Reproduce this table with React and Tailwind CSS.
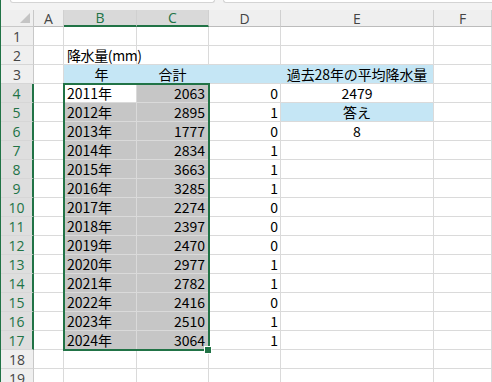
import React from "react";

const years = [
  ["2011年", 2063, 0],
  ["2012年", 2895, 1],
  ["2013年", 1777, 0],
  ["2014年", 2834, 1],
  ["2015年", 3663, 1],
  ["2016年", 3285, 1],
  ["2017年", 2274, 0],
  ["2018年", 2397, 0],
  ["2019年", 2470, 0],
  ["2020年", 2977, 1],
  ["2021年", 2782, 1],
  ["2022年", 2416, 0],
  ["2023年", 2510, 1],
  ["2024年", 3064, 1],
];

const columns = ["A", "B", "C", "D", "E", "F"];
const font = "font-['Noto_Sans_CJK_JP',sans-serif]";
const headFont = "font-['Open_Sans','Noto_Sans',sans-serif]";

function Cell({ children, className = "" }) {
  return (
    <div
      className={`h-[19px] overflow-visible whitespace-nowrap border-b border-r border-[#dadada] text-[14px] leading-[18px] text-black ${font} ${className}`}
    >
      {children}
    </div>
  );
}

function RowHead({ n, selected }) {
  return (
    <div
      className={`flex h-[19px] items-center justify-center border-b border-[#d6d6d6] text-[14px] ${headFont} ${
        selected
          ? "border-r-2 border-r-[#217346] bg-[#dedede] text-[#217346]"
          : "border-r border-r-[#c8c8c8] bg-[#efefef] text-[#444]"
      }`}
    >
      {n}
    </div>
  );
}

function buildRows() {
  const rows = [];
  for (let r = 1; r <= 19; r++) {
    const i = r - 4;
    const data = i >= 0 && i < years.length ? years[i] : null;
    let b = null;
    let c = null;
    let d = null;
    let e = null;
    let bCls = "";
    let cCls = "";
    let dCls = "";
    let eCls = "";

    if (r === 2) {
      b = "降水量(mm)";
      bCls = "tracking-[-0.4px]";
    }
    if (r === 3) {
      b = "年";
      c = "合計";
      e = "過去28年の平均降水量";
      bCls = "bg-[#c5e6f5] text-center border-r-[#c5e6f5]";
      cCls = "bg-[#c5e6f5] text-center border-r-[#c5e6f5]";
      dCls = "bg-[#c5e6f5] border-r-[#c5e6f5]";
      eCls = "bg-[#c5e6f5] text-center text-[13px] tracking-[-0.1px]";
    }
    if (data) {
      b = data[0];
      c = data[1];
      d = data[2];
      bCls = r === 4 ? "bg-white" : "bg-[#c6c6c6] border-[#b4b4b4]";
      cCls = "bg-[#c6c6c6] text-right pr-[3px] border-[#b4b4b4]";
      dCls = "text-right pr-[2px]";
    }
    if (r === 4) e = "2479";
    if (r === 5) {
      e = "答え";
      eCls = "bg-[#c5e6f5] text-center";
    }
    if (r === 6) e = "8";
    if (r === 4 || r === 6) eCls = "text-center";

    rows.push(
      <React.Fragment key={r}>
        <RowHead n={r} selected={r >= 4 && r <= 17} />
        <Cell />
        <Cell className={`pl-[3px] ${bCls}`}>{b}</Cell>
        <Cell className={cCls}>{c}</Cell>
        <Cell className={dCls}>{d}</Cell>
        <Cell className={eCls}>{e}</Cell>
        <Cell />
      </React.Fragment>
    );
  }
  return rows;
}

export default function App() {
  return (
    <div className="relative h-[382px] w-[492px] overflow-hidden border-l border-[#217346] bg-white">
      <div className="flex h-[10px] gap-[8px] bg-[#f3f3f3] pl-[9px]">
        <div className="h-[3px] w-[205px] rounded-b-[3px] border border-t-0 border-[#d4d4d4] bg-white" />
        <div className="h-[3px] flex-1 rounded-bl-[3px] border border-r-0 border-t-0 border-[#d4d4d4] bg-white" />
      </div>
      <div className="grid grid-cols-[33px_30px_73px_72px_72px_153px_1fr]">
        <div className="relative h-[17px] border-b border-r border-[#c8c8c8] bg-[#efefef]">
          <div className="absolute bottom-[3px] right-[3px] h-0 w-0 border-b-[10px] border-l-[10px] border-b-[#c4c4c4] border-l-transparent" />
        </div>
        {columns.map((col) => {
          const sel = col === "B" || col === "C";
          return (
            <div
              key={col}
              className={`flex h-[17px] items-center justify-center border-r border-[#d0d0d0] text-[14px] ${headFont} ${
                sel
                  ? "border-b-2 border-b-[#217346] bg-[#d9d9d9] text-[#217346]"
                  : "border-b border-b-[#bcbcbc] bg-[#efefef] text-[#444]"
              }`}
            >
              {col}
            </div>
          );
        })}
        {buildRows()}
      </div>
      <div className="absolute left-[62px] top-[83px] h-[268px] w-[147px] border-2 border-[#217346]" />
      <div className="absolute left-[204px] top-[347px] h-[6px] w-[6px] bg-[#217346] outline outline-1 outline-white" />
    </div>
  );
}
